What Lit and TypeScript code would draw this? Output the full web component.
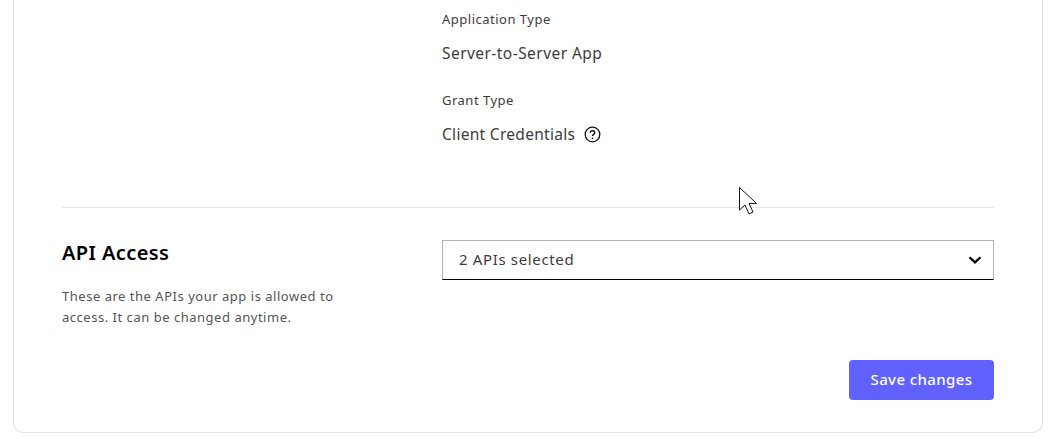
import { LitElement, html, css } from "lit";
import { customElement } from "lit/decorators.js";

@customElement("app-root")
export class AppRoot extends LitElement {
  static styles = css`
    :host { display: block; position: relative; width: 1052px; height: 439px; overflow: hidden; background: #fff;
      font-family: "Noto Sans", "Open Sans", sans-serif; color: #3c3c3c; }
    .card { box-sizing: border-box; margin: 0 9px 0 13px; height: 433px; border: 1px solid #dfdfdf; border-top: none;
      border-radius: 0 0 10px 10px; padding: 0 48px; display: flex; flex-direction: column; }
    .details { box-sizing: border-box; height: 207px; margin-left: 380px; padding-top: 11px; border: none; }
    .label { font-size: 13px; line-height: 16px; color: #3c3c3c; letter-spacing: 0.5px; }
    .value { font-size: 15.5px; line-height: 22px; margin-top: 15px; color: #3c3c3c; display: flex; align-items: center; gap: 9px; letter-spacing: 0.45px; }
    .value.tight { letter-spacing: 0.3px; }
    .grant { margin-top: 28px; }
    .rule { height: 1px; background: #e6e6e6; }
    .api { display: flex; padding-top: 32px; }
    .left { width: 380px; flex: none; }
    h2 { margin: 0; font-size: 20px; line-height: 26px; font-weight: 600; color: #000; letter-spacing: 0.4px; }
    .desc { margin: 20px 0 0; font-size: 13px; line-height: 21px; color: #555; width: 290px; letter-spacing: 0.52px; }
    .select { box-sizing: border-box; flex: 1; height: 40px; border: 1px solid #b3b3b3; border-bottom-color: #000;
      display: flex; align-items: center; justify-content: space-between; padding: 0 11px 2px 16px;
      font-size: 15px; color: #3c3c3c; letter-spacing: 0.65px; }
    .select svg { display: block; margin-top: 2px; }
    .actions { display: flex; justify-content: flex-end; margin-top: 32px; }
    button { box-sizing: border-box; width: 145px; height: 40px; border: none; border-radius: 4px; background: #6061ff;
      color: #fff; font: 500 15px "Noto Sans", sans-serif; letter-spacing: 0.4px; padding: 0 0 2px; }
    .cursor { position: absolute; left: 739px; top: 186px; }
  `;

  render() {
    return html`
      <div class="card">
        <div class="details">
          <div class="label">Application Type</div>
          <div class="value">Server-to-Server App</div>
          <div class="label grant">Grant Type</div>
          <div class="value tight">Client Credentials
            <svg width="17" height="17" viewBox="0 0 17 17" fill="none" stroke="#111" stroke-width="1.3">
              <circle cx="8.5" cy="8.5" r="7.3"/>
              <path d="M6.3 6.8c0-1.3 1-2.1 2.2-2.1s2.2.8 2.2 2c0 1.7-2.2 1.7-2.2 3.4" stroke-width="1.4"/>
              <circle cx="8.5" cy="12.3" r=".9" fill="#111" stroke="none"/>
            </svg>
          </div>
        </div>
        <div class="rule"></div>
        <div class="api">
          <div class="left">
            <h2>API Access</h2>
            <p class="desc">These are the APIs your app is allowed to access. It can be changed anytime.</p>
          </div>
          <div class="select">2 APIs selected
            <svg width="14" height="10" viewBox="0 0 14 10" fill="none" stroke="#000" stroke-width="2.2">
              <path d="M1.5 2.2 7 7.4l5.5-5.2"/>
            </svg>
          </div>
        </div>
        <div class="actions"><button>Save changes</button></div>
      </div>
      <svg class="cursor" width="19" height="30" viewBox="0 0 19 30">
        <path d="M.5 1.5V24l5.5-5 4 9 4-2-4-8.6h7.5z" fill="#fff" stroke="#111" stroke-width="1"/>
      </svg>
    `;
  }
}
